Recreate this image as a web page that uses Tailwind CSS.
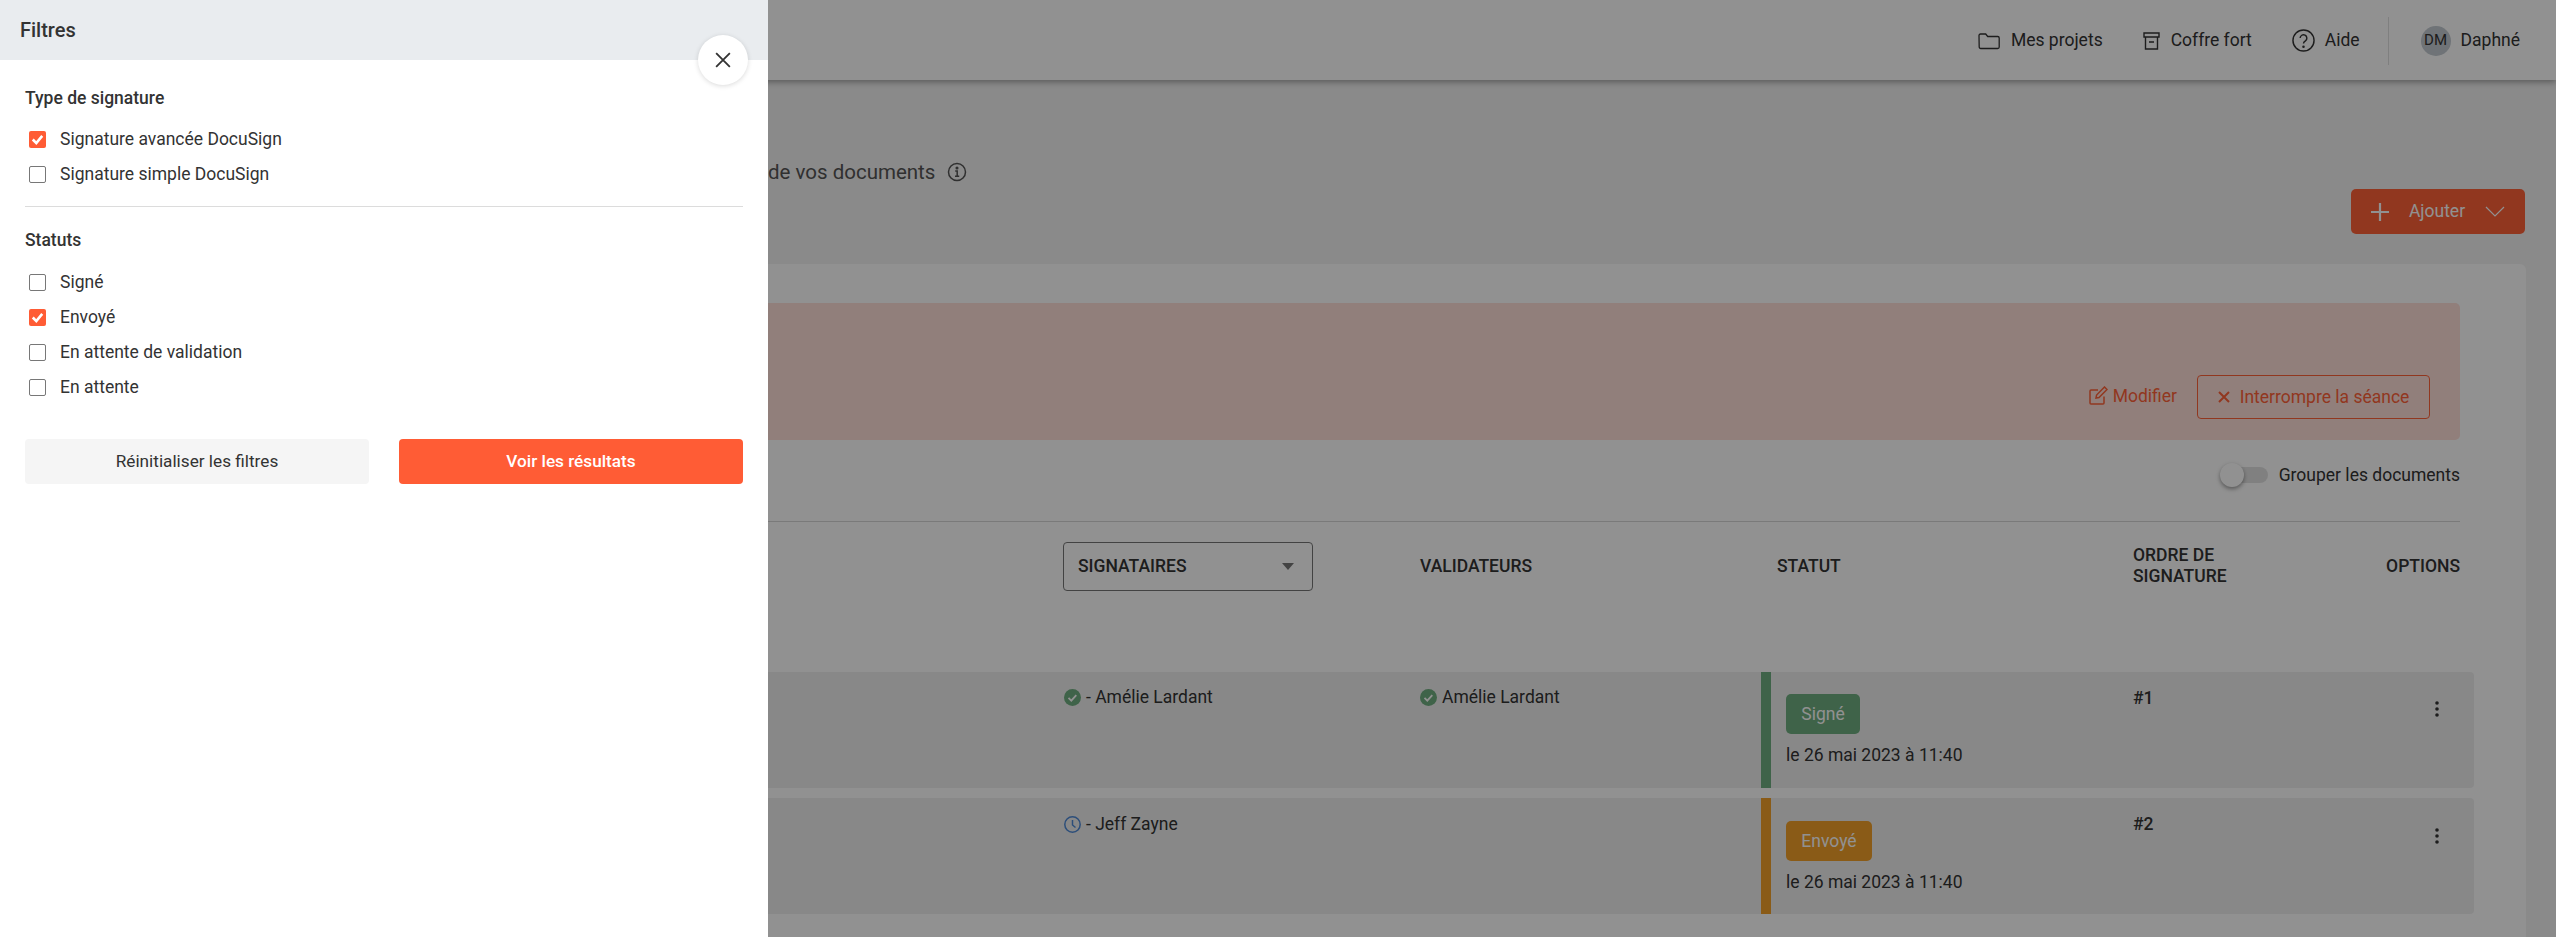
<!DOCTYPE html>
<html lang="fr">
<head>
  <meta charset="UTF-8" />
  <title>Signatures</title>
  <script src="https://cdn.jsdelivr.net/npm/@tailwindcss/browser@4"></script>
</head>
<body class="relative h-[937px] overflow-hidden bg-[#f2f2f2] font-['Roboto',sans-serif] text-[#333]">

  <!-- Barre du haut -->
  <header class="relative z-10 flex h-20 items-center justify-end bg-white pr-9 pt-px text-[17.5px] shadow-[0_2px_6px_rgba(0,0,0,0.35)]">
    <a class="flex items-center gap-[11px]">
      <svg class="h-[22px] w-[22px]" viewBox="0 0 22 22" fill="none" stroke="#333" stroke-width="1.3"><path d="M1 5.500a1.500 1.500 0 0 1 1.500-1.500h5.200l2 2.500h10a1.500 1.500 0 0 1 1.500 1.500v9a1.500 1.500 0 0 1-1.500 1.500h-17a1.500 1.500 0 0 1-1.500-1.500z"/></svg>
      Mes projets
    </a>
    <a class="ml-10 flex items-center gap-[11px]">
      <svg class="h-[18px] w-[17px]" viewBox="0 0 17 18" fill="none" stroke="#333" stroke-width="1.4"><path d="M1 1h15v4H1zM2.500 5v12h12V5M6 10h5"/></svg>
      Coffre fort
    </a>
    <a class="ml-10 flex items-center gap-[10px]">
      <svg class="h-[23px] w-[23px]" viewBox="0 0 24 24" fill="none" stroke="#333" stroke-width="1.500"><circle cx="12" cy="12" r="11"/><path d="M8.500 9.500a3.500 3.500 0 1 1 5.500 2.900c-1.200.8-2 1.400-2 2.800"/><circle cx="12" cy="18.500" r=".6" fill="#333"/></svg>
      Aide
    </a>
    <div class="ml-7 h-12 w-px bg-[#e0e0e0]"></div>
    <div class="ml-8 flex h-[30px] w-[30px] items-center justify-center rounded-full bg-[#c3cad1] text-[15px]">DM</div>
    <span class="ml-[10px]">Daphné</span>
  </header>

  <main class="px-[30px]">
    <div class="mt-20 flex h-6 items-center pl-[738px] text-[20.5px] text-[#555]">
      de vos documents
      <svg class="ml-3 h-[20px] w-[20px]" viewBox="0 0 20 20" fill="none" stroke="#555" stroke-width="1.500"><circle cx="10" cy="10" r="8.500"/><path d="M8.200 9h2v5M8 14.200h4.200"/><circle cx="10" cy="6" r=".8" fill="#555"/></svg>
    </div>

    <div class="mt-[5px] flex justify-end">
      <button class="mr-px flex h-[45px] w-[174px] items-center justify-center rounded-[5px] bg-[#ff6238] text-[17.5px] text-white">
        <svg class="h-[18px] w-[18px]" viewBox="0 0 18 18" stroke="#fff" stroke-width="2.200"><path d="M9 0v18M0 9h18"/></svg>
        <span class="mx-[20px]">Ajouter</span>
        <svg class="h-[11px] w-[20px]" viewBox="0 0 20 11" fill="none" stroke="#fff" stroke-width="1.200"><path d="M1 1l9 9 9-9"/></svg>
      </button>
    </div>

    <section class="mt-[30px] h-[700px] rounded-t-[6px] bg-white px-[66px] pt-[39px]">
      <div class="flex h-[137px] items-end justify-end rounded-[5px] bg-[#ffdfd9] pb-[21px] pr-[30px] text-[17.5px] text-[#ff6238]">
        <a class="mb-[10px] flex items-center gap-[5px]">
          <svg class="h-[19px] w-[19px]" viewBox="0 0 19 19" fill="none" stroke="#ff6238" stroke-width="1.500"><path d="M15 10.500V17a1 1 0 0 1-1 1H2a1 1 0 0 1-1-1V5a1 1 0 0 1 1-1h7"/><path d="M7 12l.6-3L15.500 1l2.500 2.500L10 11.500z"/></svg>
          Modifier
        </a>
        <button class="ml-5 flex h-11 w-[233px] items-center justify-center gap-[10px] rounded-[4px] border border-[#ff6238]">
          <svg class="h-3 w-3" viewBox="0 0 12 12" stroke="#ff6238" stroke-width="2"><path d="M1 1l10 10M11 1L1 11"/></svg>
          Interrompre la séance
        </button>
      </div>

      <div class="mt-[23px] flex h-6 items-center justify-end gap-[11px] text-[17.5px]">
        <div class="relative h-4 w-[42px] rounded-full bg-[#e2e2e2]">
          <span class="absolute -left-[6px] -top-1 h-6 w-6 rounded-full bg-white shadow-[0_2px_4px_rgba(0,0,0,0.4)]"></span>
        </div>
        Grouper les documents
      </div>

      <div class="mt-[34px] border-t border-[#d6d6d6]"></div>

      <!-- En-tête du tableau -->
      <div class="grid h-[88px] grid-cols-[967px_357px_357px_356px_1fr] items-center text-[17.5px] font-medium uppercase">
        <div></div>
        <div class="flex h-[49px] w-[250px] items-center justify-between rounded-[4px] border border-[#777] pl-[14px] pr-[18px]">
          Signataires
          <span class="h-0 w-0 border-x-[6.500px] border-t-[7px] border-x-transparent border-t-[#777]"></span>
        </div>
        <div>Validateurs</div>
        <div>Statut</div>
        <div class="flex items-center justify-between">
          <div class="w-[150px] leading-[21px]">Ordre de signature</div>
          <div>Options</div>
        </div>
      </div>

      <!-- Lignes -->
      <div class="mr-[-14px] mt-[62px] flex flex-col gap-[10px] text-[17.5px]">
        <div class="grid h-[116px] grid-cols-[968px_356px_341px_372px_1fr_auto] rounded-[4px] bg-[#f0f0f0]">
          <div></div>
          <div class="flex h-[50px] items-center gap-[5px]">
            <svg class="h-[17px] w-[17px]" viewBox="0 0 17 17"><circle cx="8.500" cy="8.500" r="8.500" fill="#6fae80"/><path d="M4.500 8.800l2.800 2.800 5-5.500" fill="none" stroke="#fff" stroke-width="1.800"/></svg>
            - Amélie Lardant
          </div>
          <div class="flex h-[50px] items-center gap-[5px]">
            <svg class="h-[17px] w-[17px]" viewBox="0 0 17 17"><circle cx="8.500" cy="8.500" r="8.500" fill="#6fae80"/><path d="M4.500 8.800l2.800 2.800 5-5.500" fill="none" stroke="#fff" stroke-width="1.800"/></svg>
            Amélie Lardant
          </div>
          <div class="border-l-[10px] border-[#6fae80] pl-[15px] pt-[22px]">
            <span class="flex h-10 w-[74px] items-center justify-center rounded-[5px] bg-[#6fae80] text-white">Signé</span>
            <p class="mt-[9px] leading-6">le 26 mai 2023 à 11:40</p>
          </div>
          <div class="flex h-[52px] items-center font-medium">#1</div>
          <div class="flex h-[74px] items-center pr-[35px]">
            <svg class="h-[16px] w-1" viewBox="0 0 4 16" fill="#333"><circle cx="2" cy="2" r="1.800"/><circle cx="2" cy="8" r="1.800"/><circle cx="2" cy="14" r="1.800"/></svg>
          </div>
        </div>
        <div class="grid h-[116px] grid-cols-[968px_356px_341px_372px_1fr_auto] rounded-[4px] bg-[#f0f0f0]">
          <div></div>
          <div class="flex h-[52px] items-center gap-[5px]">
            <svg class="h-[17px] w-[17px]" viewBox="0 0 17 17" fill="none" stroke="#4f8ad6" stroke-width="1.500"><circle cx="8.500" cy="8.500" r="7.700"/><path d="M8.500 4v5l3 2.500"/></svg>
            - Jeff Zayne
          </div>
          <div></div>
          <div class="border-l-[10px] border-[#f2a129] pl-[15px] pt-[23px]">
            <span class="flex h-10 w-[86px] items-center justify-center rounded-[5px] bg-[#f2a129] text-white">Envoyé</span>
            <p class="mt-[9px] leading-6">le 26 mai 2023 à 11:40</p>
          </div>
          <div class="flex h-[52px] items-center font-medium">#2</div>
          <div class="flex h-[76px] items-center pr-[35px]">
            <svg class="h-[16px] w-1" viewBox="0 0 4 16" fill="#333"><circle cx="2" cy="2" r="1.800"/><circle cx="2" cy="8" r="1.800"/><circle cx="2" cy="14" r="1.800"/></svg>
          </div>
        </div>
      </div>
    </section>
  </main>

  <!-- Fond assombri -->
  <div class="absolute inset-0 z-20 bg-black/[0.43]"></div>

  <!-- Panneau des filtres -->
  <aside class="absolute inset-y-0 left-0 z-30 w-[768px] bg-white text-[17.5px]">
    <div class="flex h-[60px] items-center bg-[#e9ecef] pl-5 text-[20px] font-medium">Filtres</div>

    <button class="absolute left-[698px] top-[35px] flex h-[50px] w-[50px] items-center justify-center rounded-full bg-white shadow-[0_1px_5px_rgba(0,0,0,0.15)]">
      <svg class="h-[16px] w-[16px]" viewBox="0 0 14 14" stroke="#333" stroke-width="1.600"><path d="M1 1l12 12M13 1L1 13"/></svg>
    </button>

    <div class="px-[25px] pt-[26px]">
      <h2 class="text-[17.5px] font-medium leading-6">Type de signature</h2>
      <ul class="mt-[11px]">
        <li class="flex h-[35px] items-center gap-[14px] pl-1 pt-px">
          <span class="flex h-[17px] w-[17px] items-center justify-center rounded-[2px] bg-[#ff5c35]"><svg class="h-[13px] w-[13px]" viewBox="0 0 11 11" fill="none" stroke="#fff" stroke-width="2.200"><path d="M1.500 5.500l3 3 5-6"/></svg></span>
          Signature avancée DocuSign
        </li>
        <li class="flex h-[35px] items-center gap-[14px] pl-1 pt-px">
          <span class="h-[17px] w-[17px] rounded-[2px] border border-[#777]"></span>
          Signature simple DocuSign
        </li>
      </ul>
      <hr class="mt-[15px] border-[#dcdcdc]" />
      <h2 class="mt-[21px] text-[17.5px] font-medium leading-6">Statuts</h2>
      <ul class="mt-3">
        <li class="flex h-[35px] items-center gap-[14px] pl-1 pt-px">
          <span class="h-[17px] w-[17px] rounded-[2px] border border-[#777]"></span>
          Signé
        </li>
        <li class="flex h-[35px] items-center gap-[14px] pl-1 pt-px">
          <span class="flex h-[17px] w-[17px] items-center justify-center rounded-[2px] bg-[#ff5c35]"><svg class="h-[13px] w-[13px]" viewBox="0 0 11 11" fill="none" stroke="#fff" stroke-width="2.200"><path d="M1.500 5.500l3 3 5-6"/></svg></span>
          Envoyé
        </li>
        <li class="flex h-[35px] items-center gap-[14px] pl-1 pt-px">
          <span class="h-[17px] w-[17px] rounded-[2px] border border-[#777]"></span>
          En attente de validation
        </li>
        <li class="flex h-[35px] items-center gap-[14px] pl-1 pt-px">
          <span class="h-[17px] w-[17px] rounded-[2px] border border-[#777]"></span>
          En attente
        </li>
      </ul>
      <div class="mt-[35px] grid grid-cols-2 gap-[30px] text-[17.2px]">
        <button class="h-[45px] rounded-[4px] bg-[#f5f5f5]">Réinitialiser les filtres</button>
        <button class="h-[45px] rounded-[4px] bg-[#ff5c35] font-medium text-white">Voir les résultats</button>
      </div>
    </div>
  </aside>
</body>
</html>
